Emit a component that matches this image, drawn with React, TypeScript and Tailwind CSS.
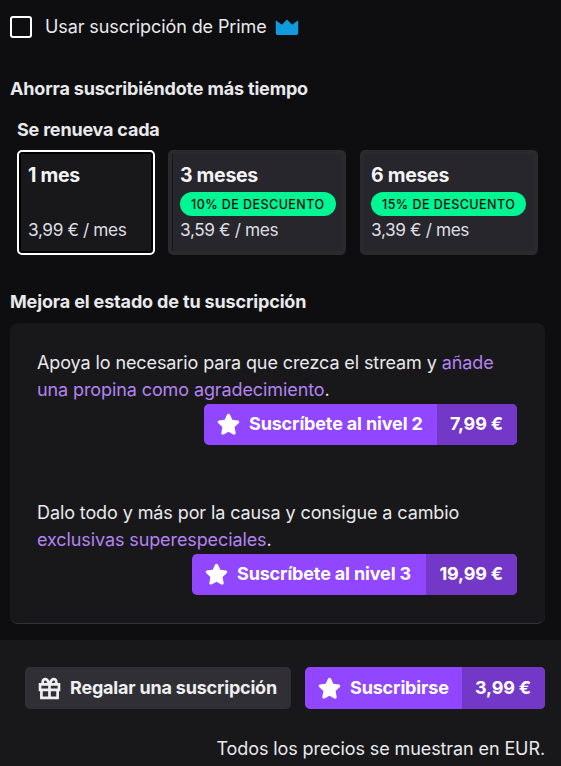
import type { ReactNode } from 'react';

function Star() {
  return (
    <svg viewBox="0 0 20 20" className="size-[27px] shrink-0" fill="currentColor">
      <path d="M8.944 2.654c.406-.872 1.706-.872 2.112 0l1.754 3.77 4.2.583c.932.13 1.318 1.209.664 1.853l-3.128 3.083.755 4.272c.163.92-.876 1.603-1.722 1.132L10 15.354l-3.579 1.993c-.846.47-1.885-.212-1.722-1.132l.755-4.272L2.326 8.86c-.654-.644-.268-1.723.664-1.853l4.2-.583 1.754-3.77z" />
    </svg>
  );
}

function Gift() {
  return (
    <svg viewBox="0 0 20 20" className="size-[27px] shrink-0" fill="currentColor" fillRule="evenodd">
      <path d="M16 6h2v6h-1v6H3v-6H2V6h2V4.793c0-2.507 3.03-3.762 4.803-1.99.131.131.249.275.352.429L10 4.5l.845-1.268a2.81 2.81 0 01.352-.429C12.969 1.031 16 2.286 16 4.793V6zM6 4.793a.793.793 0 011.354-.561.66.66 0 01.082.1L8.465 6H6V4.793zm8 0a.793.793 0 00-1.354-.561.66.66 0 00-.082.1L11.535 6H14V4.793zM9 8v2H4V8h5zm0 4v4H5v-4h4zm2 0h4v4h-4v-4zm5-2h-5V8h5v2z" />
    </svg>
  );
}

function Crown() {
  return (
    <svg viewBox="0 0 20 20" className="size-[28px] shrink-0" fill="#0f9bdc">
      <path d="M13.7 8.4L10 4.6 6.3 8.4 2 5.2v9.3a1.3 1.3 0 001.3 1.3h13.4a1.3 1.3 0 001.3-1.3V5.2l-4.3 3.2z" />
    </svg>
  );
}

function SubButton({ label, price, className }: { label: string; price: string; className: string }) {
  return (
    <button className={`flex overflow-hidden rounded-[5px] bg-[#9147ff] font-[650] tracking-[-0.15px] text-white ${className}`}>
      <span className="flex flex-1 items-center gap-[7px] pl-[11px] whitespace-nowrap">
        <Star />
        <span className="pb-[2px]">{label}</span>
      </span>
      <span className="flex items-center bg-[#7338c8] pr-[14px] pl-[13.4px] pb-[2px] whitespace-nowrap">{price}</span>
    </button>
  );
}

function Plan({ title, badge, price, className }: { title: string; badge?: string; price: string; className: string }) {
  return (
    <div className={`flex h-[105px] flex-col rounded-[5px] ${className}`}>
      <div className="h-[31px] text-[19.5px] leading-[29px] font-[650] tracking-[-0.3px] text-[#f4f4f6]">{title}</div>
      <div className="flex h-[24px]">
        {badge && (
          <span className="h-6 rounded-full bg-[#00f593] px-[11px] text-[12.5px] leading-[25px] font-medium tracking-[0.45px] whitespace-nowrap text-[#0e0e10]">
            {badge}
          </span>
        )}
      </div>
      <div className="text-[17.3px] leading-[28px] tracking-[-0.4px] text-[#dedee3]">{price}</div>
    </div>
  );
}

function Accent({ children }: { children: ReactNode }) {
  return <span className="text-[#b483f2]">{children}</span>;
}

export default function App() {
  return (
    <div className="flex h-[766px] w-[561px] flex-col overflow-hidden bg-[#0e0e10] font-['Inter','Liberation_Sans',sans-serif] text-[18px] leading-[27px] tracking-[-0.1px] text-[#e9e9ec]">
      <div className="flex h-[53px] items-center pl-[10px]">
        <span className="size-[22px] rounded-[3px] border-2 border-white" />
        <span className="ml-[13px] whitespace-nowrap">Usar suscripción de Prime</span>
        <span className="ml-[6.5px]">
          <Crown />
        </span>
      </div>
      <h2 className="mt-[22px] ml-[10px] font-[650] tracking-[-0.17px]">Ahorra suscribiéndote más tiempo</h2>
      <h3 className="mt-[14px] ml-[17px] font-[650] tracking-[-0.2px]">Se renueva cada</h3>
      <div className="mt-[7px] ml-[17px] flex">
        <Plan title="1 mes" price="3,99 € / mes" className="w-[138px] border-2 border-white bg-[#18181b] pt-[9px] pl-[9px] shadow-[inset_0_0_0_2px_#000]" />
        <Plan title="3 meses" badge="10% DE DESCUENTO" price="3,59 € / mes" className="ml-[13px] w-[178px] border-4 border-[#2a2a2d] bg-[#26262c] pt-[7px] pl-[8px] shadow-[inset_1px_0_0_#151517]" />
        <Plan title="6 meses" badge="15% DE DESCUENTO" price="3,39 € / mes" className="ml-[14px] w-[178px] border-4 border-[#2a2a2d] bg-[#26262c] pt-[7px] pl-[7px]" />
      </div>
      <h2 className="mt-[33px] ml-[10px] font-[650] tracking-[-0.15px]">Mejora el estado de tu suscripción</h2>
      <section className="mt-[8px] ml-[10px] flex h-[301px] w-[535px] flex-col rounded-[8px] border-b border-[#343438] bg-[#18181b] pt-[26px] pr-[28px] pl-[27px]">
        <p className="whitespace-nowrap">
          Apoya lo necesario para que crezca el stream y <Accent>añade</Accent>
          <br />
          <Accent>una propina como agradecimiento</Accent>.
        </p>
        <SubButton label="Suscríbete al nivel 2" price="7,99 €" className="mt-px h-[41px] w-[313px] self-end" />
        <p className="mt-[54px] whitespace-nowrap">
          Dalo todo y más por la causa y consigue a cambio
          <br />
          <Accent>exclusivas superespeciales</Accent>.
        </p>
        <SubButton label="Suscríbete al nivel 3" price="19,99 €" className="mt-px h-[41px] w-[325px] self-end" />
      </section>
      <footer className="mt-[16px] flex flex-1 flex-col bg-[#18181b] pt-[27px] pr-[16px] pl-[25px]">
        <div className="flex justify-between">
          <button className="flex h-[42px] w-[266px] items-center gap-[7px] rounded-[5px] bg-[#2f2f35] pl-[11px] font-[650] tracking-[-0.2px] whitespace-nowrap text-[#efeff1]">
            <Gift />
            <span className="pb-px">Regalar una suscripción</span>
          </button>
          <SubButton label="Suscribirse" price="3,99 €" className="h-[42px] w-[240px]" />
        </div>
        <p className="mt-[26px] text-right whitespace-nowrap">Todos los precios se muestran en EUR.</p>
      </footer>
    </div>
  );
}
